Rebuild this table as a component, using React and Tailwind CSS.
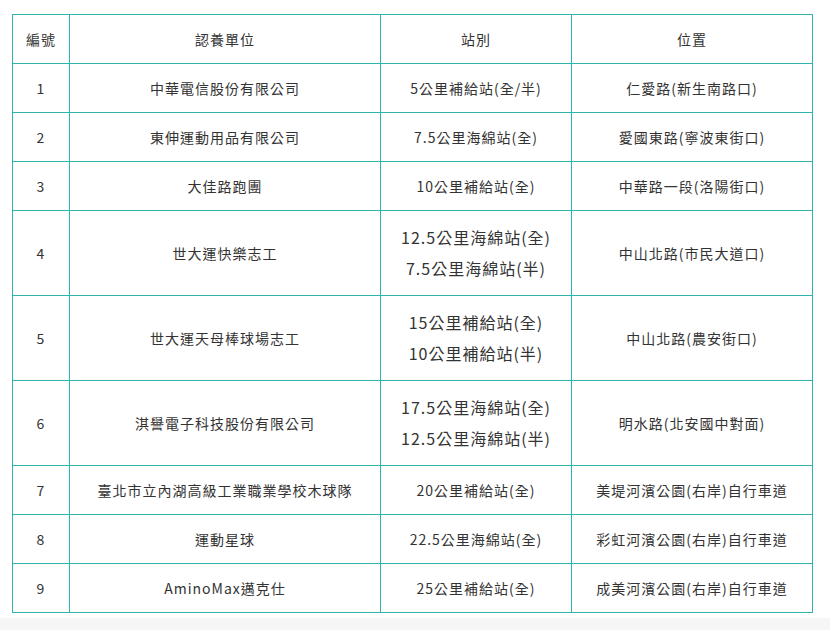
import React from "react";

const rows = [
  ["1", "中華電信股份有限公司", ["5公里補給站(全/半)"], "仁愛路(新生南路口)"],
  ["2", "東伸運動用品有限公司", ["7.5公里海綿站(全)"], "愛國東路(寧波東街口)"],
  ["3", "大佳路跑團", ["10公里補給站(全)"], "中華路一段(洛陽街口)"],
  ["4", "世大運快樂志工", ["12.5公里海綿站(全)", "7.5公里海綿站(半)"], "中山北路(市民大道口)"],
  ["5", "世大運天母棒球場志工", ["15公里補給站(全)", "10公里補給站(半)"], "中山北路(農安街口)"],
  ["6", "淇譽電子科技股份有限公司", ["17.5公里海綿站(全)", "12.5公里海綿站(半)"], "明水路(北安國中對面)"],
  ["7", "臺北市立內湖高級工業職業學校木球隊", ["20公里補給站(全)"], "美堤河濱公園(右岸)自行車道"],
  ["8", "運動星球", ["22.5公里海綿站(全)"], "彩虹河濱公園(右岸)自行車道"],
  ["9", "AminoMax邁克仕", ["25公里補給站(全)"], "成美河濱公園(右岸)自行車道"],
];

const cell = "border border-[#2eb3ad] text-center align-middle p-0";

export default function App() {
  return (
    <div
      className="min-h-screen bg-[#f6f6f6] text-[#333] text-[14px] tracking-[1px]"
      style={{ fontFamily: '"Noto Sans CJK TC", "Noto Sans", sans-serif' }}
    >
      <div className="bg-white pt-[14px] pb-[5px] px-[12px]">
        <table className="w-[800px] border-collapse table-fixed">
          <colgroup>
            <col className="w-[57px]" />
            <col className="w-[311px]" />
            <col className="w-[191px]" />
            <col className="w-[241px]" />
          </colgroup>
          <thead>
            <tr className="h-[49px]">
              <th className={cell + " font-normal"}>編號</th>
              <th className={cell + " font-normal"}>認養單位</th>
              <th className={cell + " font-normal"}>站別</th>
              <th className={cell + " font-normal"}>位置</th>
            </tr>
          </thead>
          <tbody>
            {rows.map(([no, name, stations, place]) => {
              const two = stations.length > 1;
              return (
                <tr key={no} className={two ? "h-[85px]" : "h-[49px]"}>
                  <td className={cell}>{no}</td>
                  <td className={cell}>{name}</td>
                  <td className={cell}>
                    {two ? (
                      <div className="text-[16px] leading-[31px]">
                        {stations.map((s) => (
                          <div key={s}>{s}</div>
                        ))}
                      </div>
                    ) : (
                      stations[0]
                    )}
                  </td>
                  <td className={cell}>{place}</td>
                </tr>
              );
            })}
          </tbody>
        </table>
      </div>
    </div>
  );
}
